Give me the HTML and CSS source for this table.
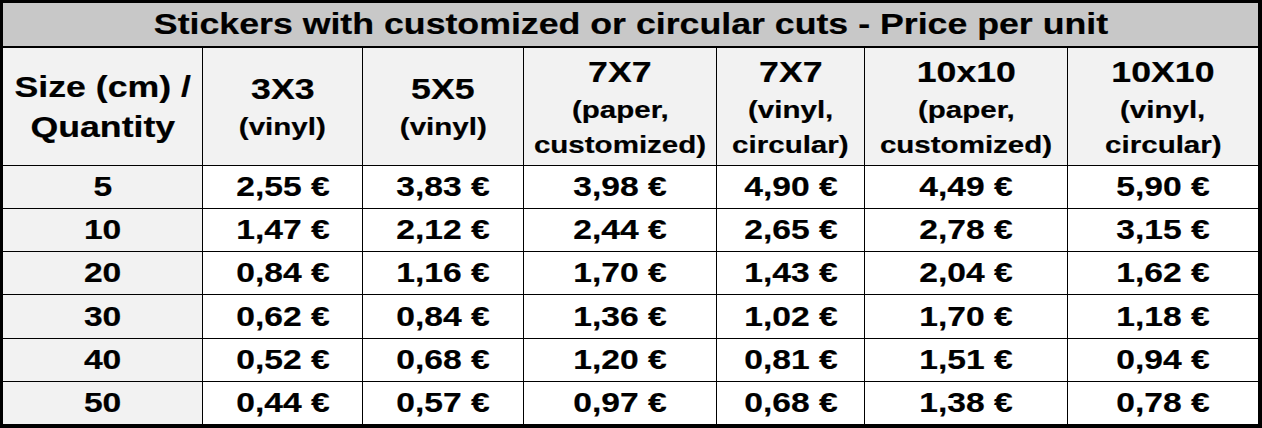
FILE: index.html
```html
<!DOCTYPE html>
<html lang="en">
<head>
<meta charset="utf-8">
<title>Stickers price per unit</title>
<link rel="stylesheet" href="styles.css">
</head>
<body>
<div class="sheet">
  <div class="title"><span class="t">Stickers with customized or circular cuts - Price per unit</span></div>

  <div class="hd"><span class="m">Size (cm) /</span><span class="m">Quantity</span></div>
  <div class="hd"><span class="m">3X3</span><span class="s">(vinyl)</span></div>
  <div class="hd"><span class="m">5X5</span><span class="s">(vinyl)</span></div>
  <div class="hd"><span class="m">7X7</span><span class="s">(paper,</span><span class="s">customized)</span></div>
  <div class="hd"><span class="m">7X7</span><span class="s">(vinyl,</span><span class="s">circular)</span></div>
  <div class="hd"><span class="m">10x10</span><span class="s">(paper,</span><span class="s">customized)</span></div>
  <div class="hd"><span class="m">10X10</span><span class="s">(vinyl,</span><span class="s">circular)</span></div>

  <div class="qty"><span class="v">5</span></div>
  <div class="price"><span class="v">2,55 €</span></div>
  <div class="price"><span class="v">3,83 €</span></div>
  <div class="price"><span class="v">3,98 €</span></div>
  <div class="price"><span class="v">4,90 €</span></div>
  <div class="price"><span class="v">4,49 €</span></div>
  <div class="price"><span class="v">5,90 €</span></div>

  <div class="qty"><span class="v">10</span></div>
  <div class="price"><span class="v">1,47 €</span></div>
  <div class="price"><span class="v">2,12 €</span></div>
  <div class="price"><span class="v">2,44 €</span></div>
  <div class="price"><span class="v">2,65 €</span></div>
  <div class="price"><span class="v">2,78 €</span></div>
  <div class="price"><span class="v">3,15 €</span></div>

  <div class="qty"><span class="v">20</span></div>
  <div class="price"><span class="v">0,84 €</span></div>
  <div class="price"><span class="v">1,16 €</span></div>
  <div class="price"><span class="v">1,70 €</span></div>
  <div class="price"><span class="v">1,43 €</span></div>
  <div class="price"><span class="v">2,04 €</span></div>
  <div class="price"><span class="v">1,62 €</span></div>

  <div class="qty"><span class="v">30</span></div>
  <div class="price"><span class="v">0,62 €</span></div>
  <div class="price"><span class="v">0,84 €</span></div>
  <div class="price"><span class="v">1,36 €</span></div>
  <div class="price"><span class="v">1,02 €</span></div>
  <div class="price"><span class="v">1,70 €</span></div>
  <div class="price"><span class="v">1,18 €</span></div>

  <div class="qty"><span class="v">40</span></div>
  <div class="price"><span class="v">0,52 €</span></div>
  <div class="price"><span class="v">0,68 €</span></div>
  <div class="price"><span class="v">1,20 €</span></div>
  <div class="price"><span class="v">0,81 €</span></div>
  <div class="price"><span class="v">1,51 €</span></div>
  <div class="price"><span class="v">0,94 €</span></div>

  <div class="qty"><span class="v">50</span></div>
  <div class="price"><span class="v">0,44 €</span></div>
  <div class="price"><span class="v">0,57 €</span></div>
  <div class="price"><span class="v">0,97 €</span></div>
  <div class="price"><span class="v">0,68 €</span></div>
  <div class="price"><span class="v">1,38 €</span></div>
  <div class="price"><span class="v">0,78 €</span></div>
</div>
</body>
</html>
```

FILE: styles.css
```css
html, body {
  margin: 0;
  padding: 0;
  background: #ffffff;
}

.sheet {
  box-sizing: border-box;
  width: 1262px;
  height: 428px;
  display: grid;
  grid-template-columns: 199px 159px 160px 192px 147px 202px 190px;
  grid-template-rows: 44px 117px 42px 42px 42px 43px 42px 42px;
  gap: 1px;
  background: #000000;
  border-style: solid;
  border-color: #000000;
  border-width: 3px 4px 4px 3px;
  font-family: "Liberation Sans", Arial, sans-serif;
  font-weight: bold;
  color: #000000;
  -webkit-text-stroke: 0.2px #000000;
}

.title {
  grid-column: 1 / -1;
  box-sizing: border-box;
  border-bottom: 1px solid #000000;
  background: #c8c8c8;
  display: flex;
  align-items: center;
  justify-content: center;
}

.t {
  display: inline-block;
  font-size: 30px;
  line-height: 32px;
  transform: scaleX(1.19);
  padding-bottom: 1px;
}

.hd {
  background: #f2f2f2;
  display: flex;
  flex-direction: column;
  align-items: center;
  justify-content: center;
}

.m {
  display: block;
  font-size: 29px;
  line-height: 40px;
  transform: scaleX(1.23);
}

.s {
  display: block;
  font-size: 24px;
  line-height: 35px;
  transform: scaleX(1.23);
}

.qty,
.price {
  display: flex;
  align-items: center;
  justify-content: center;
}

.qty {
  background: #f2f2f2;
}

.price {
  background: #ffffff;
}

.v {
  display: inline-block;
  font-size: 28px;
  line-height: 32px;
  transform: scaleX(1.2);
}
```
